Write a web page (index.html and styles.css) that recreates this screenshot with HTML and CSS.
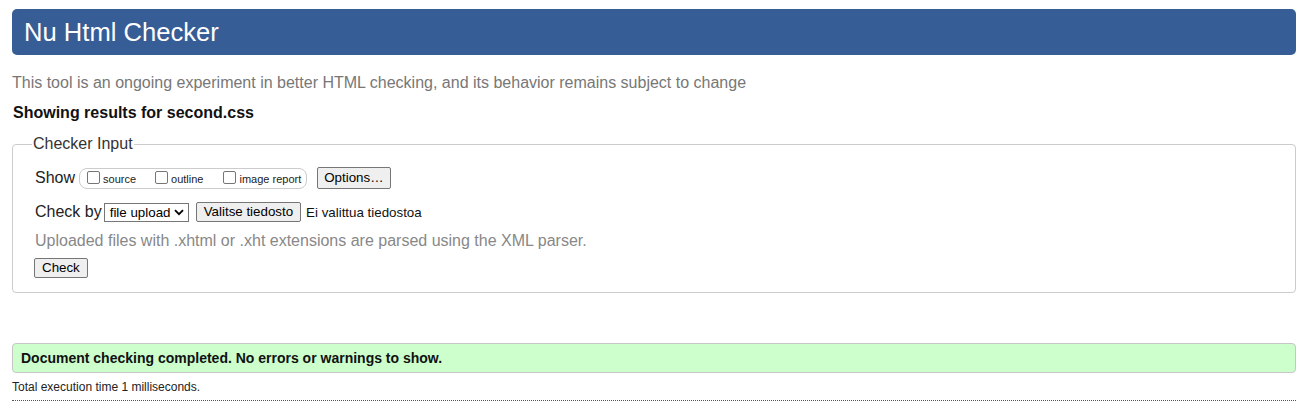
FILE: index.html
```html
<!DOCTYPE html>
<html lang="en">
<head>
<meta charset="utf-8">
<title>Showing results for second.css - Nu Html Checker</title>
<link rel="stylesheet" href="styles.css">
</head>
<body>
<h1 class="title">Nu Html Checker</h1>
<p class="intro">This tool is an ongoing experiment in better HTML checking, and its behavior remains subject to change</p>
<p class="showing">Showing results for second.css</p>
<form class="checker">
  <fieldset class="input-box">
    <legend class="legend">Checker Input</legend>
    <div class="row row-show">
      <span class="row-label">Show</span>
      <span class="opts">
        <label class="opt opt-source"><span class="cb"></span><span class="opt-text">source</span></label>
        <label class="opt opt-outline"><span class="cb"></span><span class="opt-text">outline</span></label>
        <label class="opt opt-image"><span class="cb"></span><span class="opt-text">image report</span></label>
      </span>
      <button type="button" class="btn btn-options">Options…</button>
    </div>
    <div class="row row-check">
      <span class="row-label">Check by</span>
      <span class="select-wrap">
        <span class="select">file upload</span>
        <svg class="chev" width="10" height="7" viewBox="0 0 10 7"><path d="M1 1.2 L5 5.2 L9 1.2" fill="none" stroke="#000" stroke-width="1.8"/></svg>
      </span>
      <button type="button" class="btn btn-file">Valitse tiedosto</button>
      <span class="file-status">Ei valittua tiedostoa</span>
    </div>
    <p class="note">Uploaded files with .xhtml or .xht extensions are parsed using the XML parser.</p>
    <div class="row row-submit">
      <button type="button" class="btn btn-check">Check</button>
    </div>
  </fieldset>
</form>
<p class="success">Document checking completed. No errors or warnings to show.</p>
<p class="stats">Total execution time 1 milliseconds.</p>
<hr class="rule">
</body>
</html>
```

FILE: styles.css
```css
html, body {
  background: #fff;
}
body {
  margin: 0;
  padding: 9px 15px 0 12px;
  font-family: "Liberation Sans", Arial, sans-serif;
  color: #222;
}
.title {
  margin: 0;
  height: 46px;
  box-sizing: border-box;
  padding: 8px 12px;
  background: #365d95;
  color: #fff;
  font-size: 25.6px;
  line-height: 30px;
  font-weight: normal;
  border-radius: 5px;
}
.intro {
  margin: 19px 0 0;
  font-size: 16px;
  line-height: 18px;
  color: #777;
}
.showing {
  margin: 12px 0 0 1px;
  font-size: 16px;
  line-height: 18px;
  font-weight: bold;
  color: #111;
}
.checker {
  margin: 13px 0 0;
}
.input-box {
  margin: 0;
  padding: 13px 20px 14px 22px;
  border: 1px solid #ccc;
  border-radius: 4px;
  min-width: 0;
}
.legend {
  padding: 0 1px;
  margin-left: -3px;
  font-size: 16px;
  line-height: 18px;
  color: #333;
}
.row {
  display: flex;
  align-items: center;
}
.row-label {
  font-size: 16px;
  line-height: 18px;
  color: #222;
}
.row-show {
  height: 24px;
}
.opts {
  display: inline-flex;
  align-items: center;
  height: 19px;
  margin-left: 4px;
  padding: 0 5px 0 7px;
  border: 1px solid #ccc;
  border-radius: 8px;
}
.opt {
  display: inline-flex;
  align-items: center;
  font-size: 11px;
  color: #222;
}
.opt-source { margin-right: 19px; }
.opt-outline { margin-right: 20px; }
.cb {
  width: 11px;
  height: 11px;
  border: 1px solid #767676;
  border-radius: 2px;
  background: #fff;
  margin: 0 3px 2px 0;
}
.opt-text {
  line-height: 13px;
  margin-top: 2px;
}
.btn {
  font-family: "Liberation Sans", Arial, sans-serif;
  font-size: 13.333px;
  line-height: 16px;
  color: #000;
  background: #efefef;
  border: 1px solid #767676;
  border-radius: 2px;
  padding: 1px 7px;
}
.btn-options {
  margin-left: 10px;
  padding: 2px 6px;
}
.row-check {
  height: 24px;
  margin-top: 10px;
}
.select-wrap {
  position: relative;
  margin-left: 2px;
  display: inline-flex;
}
.select {
  display: inline-block;
  width: 85px;
  height: 19px;
  box-sizing: border-box;
  border: 1px solid #767676;
  padding: 0 0 0 5px;
  font-size: 13.333px;
  line-height: 17px;
  color: #000;
}
.chev {
  position: absolute;
  right: 5px;
  top: 6px;
}
.btn-file {
  margin-left: 7px;
  padding: 1px 7px;
}
.file-status {
  margin-left: 5px;
  font-size: 13.333px;
  color: #111;
}
.note {
  margin: 8px 0 0;
  font-size: 16px;
  line-height: 18px;
  color: #888;
}
.row-submit {
  margin-top: 8px;
}
.btn-check {
  margin-left: -1px;
}
.success {
  margin: 50px 0 0;
  height: 30px;
  box-sizing: border-box;
  padding: 5px 8px;
  background: #ccffcc;
  border: 1px solid #c6c6c6;
  border-radius: 4px;
  font-size: 14px;
  line-height: 18px;
  font-weight: bold;
  color: #111;
}
.stats {
  margin: 7px 0 0;
  font-size: 12px;
  line-height: 14px;
  color: #222;
}
.rule {
  margin: 6px 0 0;
  border: 0;
  border-top: 1px dotted #555;
  height: 0;
}
```
